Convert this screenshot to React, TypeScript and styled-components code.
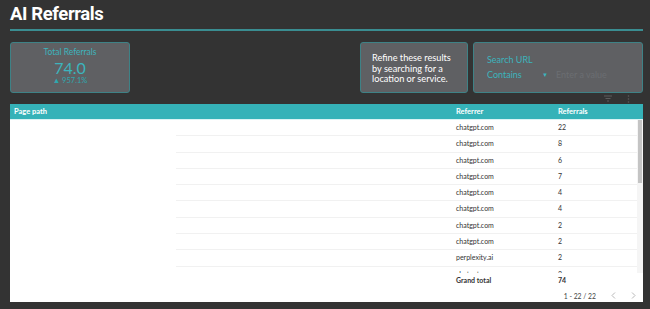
import React from 'react'
import styled, { createGlobalStyle } from 'styled-components'

const GlobalStyle = createGlobalStyle`
  html, body {
    margin: 0;
    padding: 0;
    background: #333333;
  }
  body {
    font-family: Lato, "Open Sans", sans-serif;
  }
`

const Page = styled.div`
  width: 650px;
  height: 309px;
  box-sizing: border-box;
  padding: 0 7px 0 10px;
  overflow: hidden;
`

const Title = styled.h1`
  margin: 0;
  padding-top: 3px;
  font-family: Roboto, "Liberation Sans", sans-serif;
  font-weight: 700;
  font-size: 18.5px;
  letter-spacing: -0.4px;
  line-height: 23px;
  color: #ffffff;
`

const TitleRule = styled.div`
  height: 2px;
  margin-top: 3px;
  background: #3a8d91;
`

const FilterRow = styled.div`
  display: flex;
  align-items: stretch;
  margin-top: 11px;
  height: 51px;
`

const Card = styled.div<{ $width: number }>`
  width: ${p => p.$width}px;
  box-sizing: border-box;
  background: #5f6063;
  border: 1px solid #3e8286;
  border-radius: 3px;
`

const Spacer = styled.div`
  flex: 1;
`

const Scorecard = styled(Card)`
  display: flex;
  flex-direction: column;
  align-items: center;
  padding-top: 4px;
  color: #3cb4bd;
`

const ScoreLabel = styled.div`
  font-size: 8.5px;
  line-height: 11px;
`

const ScoreValue = styled.div`
  font-size: 16px;
  line-height: 19px;
`

const ScoreDelta = styled.div`
  font-size: 7.5px;
  line-height: 8px;
  color: #2fa7ae;
`

const Note = styled(Card)`
  margin-right: 5px;
  padding: 10px 0 0 11px;
  font-size: 9.2px;
  line-height: 10.5px;
  color: #ffffff;
`

const SearchCard = styled(Card)`
  padding: 11px 0 0 13px;
  color: #3cb4bd;
  font-size: 9px;
`

const SearchLabel = styled.div`
  line-height: 11px;
`

const SearchControls = styled.div`
  display: flex;
  align-items: center;
  margin-top: 4px;
  line-height: 11px;
`

const Operator = styled.span`
  width: 55px;
`

const Caret = styled.span`
  width: 14px;
  font-size: 6px;
`

const Placeholder = styled.span`
  color: #6b6e72;
`

const IconRow = styled.div`
  display: flex;
  justify-content: flex-end;
  align-items: center;
  gap: 15px;
  height: 11px;
  padding-right: 13px;
`

const Table = styled.div`
  background: #ffffff;
  height: 198px;
  display: flex;
  flex-direction: column;
  overflow: hidden;
`

const HeaderRow = styled.div`
  flex-shrink: 0;
  display: grid;
  grid-template-columns: 166px 274px 102px 1fr;
  height: 15px;
  background: #35b2b8;
  color: #ffffff;
  font-weight: 700;
  font-size: 7.5px;
  line-height: 15px;
  border-bottom: 1px solid #d9f3f4;
`

const HeadCell = styled.div`
  padding-left: 6px;
  &:first-child {
    padding-left: 4px;
  }
`

const Body = styled.div`
  position: relative;
  flex-shrink: 0;
  height: 153px;
  overflow: hidden;
`

const ScrollTrack = styled.div`
  position: absolute;
  top: 0;
  right: 0;
  width: 6px;
  height: 100%;
  background: #f5f5f5;
`

const ScrollThumb = styled.div`
  position: absolute;
  top: 0;
  right: 1px;
  width: 4px;
  height: 63px;
  background: #c4c4c4;
`

const Row = styled.div<{ $total?: boolean }>`
  flex-shrink: 0;
  display: grid;
  grid-template-columns: 166px 274px 102px 86px;
  height: 16.3px;
  font-size: 7px;
  line-height: 14.5px;
  color: #333333;
  font-weight: ${p => (p.$total ? 700 : 400)};
`

const Cell = styled.div<{ $ruled?: boolean }>`
  padding-left: 6px;
  border-bottom: 1px solid ${p => (p.$ruled ? '#f1f1f1' : 'transparent')};
  white-space: nowrap;
`

const Footer = styled.div`
  flex-shrink: 0;
  display: flex;
  justify-content: flex-end;
  align-items: center;
  height: 13px;
  font-size: 6.8px;
  color: #444444;
  padding-bottom: 1px;
`

const PageInfo = styled.span`
  margin-right: 7px;
`

const PagerButton = styled.span`
  width: 20px;
  display: flex;
  justify-content: center;
  align-items: center;
`

const rows: [string, number][] = [
  ['chatgpt.com', 22],
  ['chatgpt.com', 8],
  ['chatgpt.com', 6],
  ['chatgpt.com', 7],
  ['chatgpt.com', 4],
  ['chatgpt.com', 4],
  ['chatgpt.com', 2],
  ['chatgpt.com', 2],
  ['perplexity.ai', 2],
  ['chatgpt.com', 2],
  ['chatgpt.com', 2],
  ['perplexity.ai', 2],
  ['chatgpt.com', 2],
  ['chatgpt.com', 1],
  ['chatgpt.com', 1],
  ['gemini.google.com', 1],
  ['chatgpt.com', 1],
  ['chatgpt.com', 1],
  ['copilot.microsoft.com', 1],
  ['chatgpt.com', 1],
  ['chatgpt.com', 1],
  ['perplexity.ai', 1],
]

function FilterIcon() {
  return (
    <svg width="8" height="7" viewBox="0 0 8 7">
      <path d="M0 1h8M1.5 3.5h5M3 6h2" stroke="#5c5c5c" strokeWidth="1" />
    </svg>
  )
}

function KebabIcon() {
  return (
    <svg width="3" height="8" viewBox="0 0 3 8">
      <circle cx="1.5" cy="1" r="0.8" fill="#5c5c5c" />
      <circle cx="1.5" cy="4" r="0.8" fill="#5c5c5c" />
      <circle cx="1.5" cy="7" r="0.8" fill="#5c5c5c" />
    </svg>
  )
}

function Chevron({ dir }: { dir: 'left' | 'right' }) {
  const d = dir === 'left' ? 'M4 0.5L1 3.5L4 6.5' : 'M1 0.5L4 3.5L1 6.5'
  return (
    <svg width="5" height="7" viewBox="0 0 5 7">
      <path d={d} fill="none" stroke="#b8b8b8" strokeWidth="1" />
    </svg>
  )
}

export default function App() {
  return (
    <Page>
      <GlobalStyle />
      <Title>AI Referrals</Title>
      <TitleRule />
      <FilterRow>
        <Scorecard $width={120}>
          <ScoreLabel>Total Referrals</ScoreLabel>
          <ScoreValue>74.0</ScoreValue>
          <ScoreDelta>▲ 957.1%</ScoreDelta>
        </Scorecard>
        <Spacer />
        <Note $width={108}>
          Refine these results
          <br />
          by searching for a
          <br />
          location or service.
        </Note>
        <SearchCard $width={170}>
          <SearchLabel>Search URL</SearchLabel>
          <SearchControls>
            <Operator>Contains</Operator>
            <Caret>▼</Caret>
            <Placeholder>Enter a value</Placeholder>
          </SearchControls>
        </SearchCard>
      </FilterRow>
      <IconRow>
        <FilterIcon />
        <KebabIcon />
      </IconRow>
      <Table>
        <HeaderRow>
          <HeadCell>Page path</HeadCell>
          <HeadCell />
          <HeadCell>Referrer</HeadCell>
          <HeadCell>Referrals</HeadCell>
        </HeaderRow>
        <Body>
          {rows.map(([ref, n], i) => (
            <Row key={i}>
              <Cell />
              <Cell $ruled />
              <Cell $ruled>{ref}</Cell>
              <Cell $ruled>{n}</Cell>
            </Row>
          ))}
          <ScrollTrack />
          <ScrollThumb />
        </Body>
        <Row $total>
          <Cell />
          <Cell />
          <Cell>Grand total</Cell>
          <Cell>74</Cell>
        </Row>
        <Footer>
          <PageInfo>1 - 22 / 22</PageInfo>
          <PagerButton>
            <Chevron dir="left" />
          </PagerButton>
          <PagerButton>
            <Chevron dir="right" />
          </PagerButton>
        </Footer>
      </Table>
    </Page>
  )
}
